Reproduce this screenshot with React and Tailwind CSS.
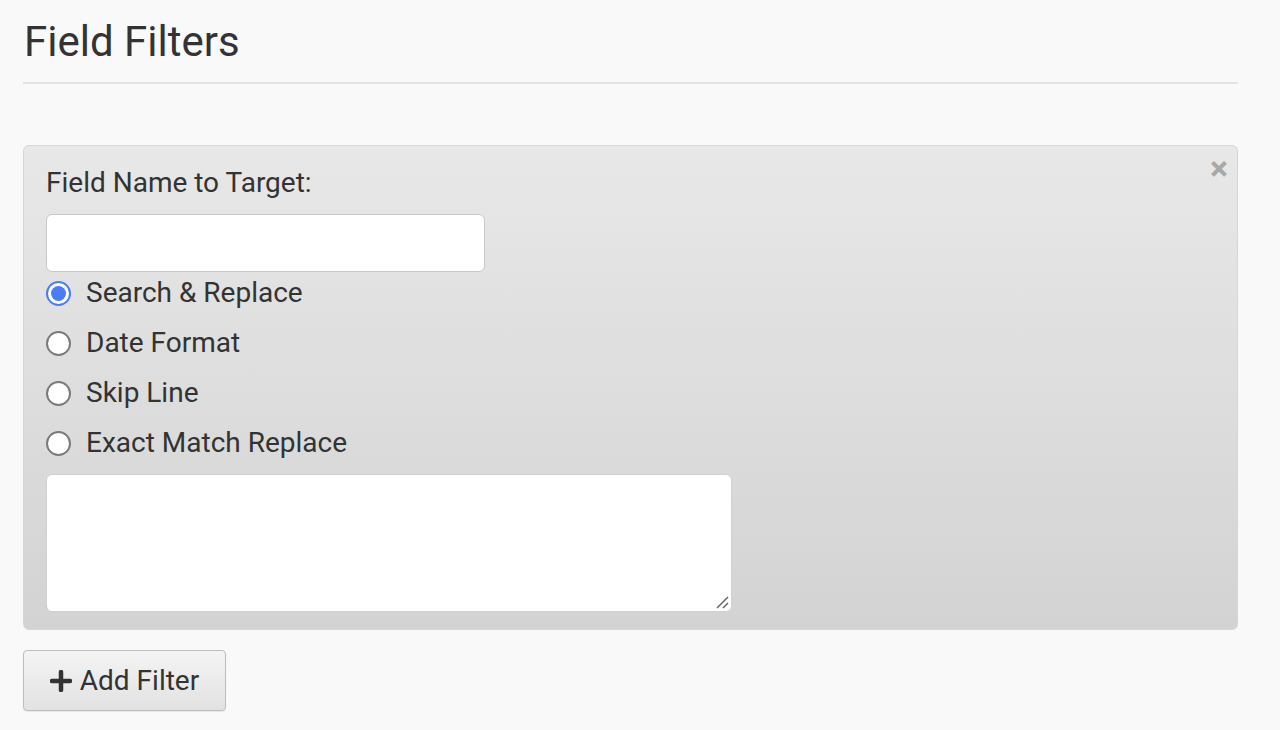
import React, { useState } from 'react';

const options = ['Search & Replace', 'Date Format', 'Skip Line', 'Exact Match Replace'];

const App = () => {
    const [selected, setSelected] = useState(0);

    return (
        <div className="min-h-[730px] w-full bg-[#f9f9f9] text-[#333333] font-['Roboto','Liberation_Sans',sans-serif]">
            <div className="pl-[23px] pr-[42px] pt-[14px]">
                {/* Titulo */}
                <h1 className="text-[42px] leading-[56px] font-normal pl-px">Field Filters</h1>
                <div className="mt-[12px] h-[2px] bg-[#e3e3e3]"></div>

                {/* Panel de filtro */}
                <div className="relative mt-[61px] h-[485px] rounded-[6px] border border-[#d6d6d6] bg-gradient-to-b from-[#e8e8e8] to-[#d3d3d3] pl-[22px] pt-[20px]">
                    <button className="absolute right-[9px] top-[5px] text-[#a8a8a8] text-[34px] font-bold leading-none">×</button>
                    <label className="block text-[28px] leading-[34px]">Field Name to Target:</label>
                    <input
                        type="text"
                        className="mt-[14px] block h-[58px] w-[439px] rounded-[6px] border border-[#c8c8c8] bg-white outline-none"
                    />
                    <div className="-mt-[4px] flex flex-col">
                        {options.map((opt, i) => (
                            <label key={opt} className="flex h-[50px] items-center cursor-pointer" onClick={() => setSelected(i)}>
                                <span className={`flex h-[25px] w-[25px] items-center justify-center rounded-full bg-white border-2 ${selected === i ? 'border-[#4a7cf7]' : 'border-[#7a7a7a]'}`}>
                                    {selected === i && <span className="h-[15px] w-[15px] rounded-full bg-[#4a7cf7]"></span>}
                                </span>
                                <span className="ml-[15px] text-[28px]">{opt}</span>
                            </label>
                        ))}
                    </div>
                    <div className="relative mt-[6px] h-[138px] w-[686px] rounded-[6px] border border-[#d0d0d0] bg-white">
                        <svg className="absolute right-[2px] bottom-[2px]" width="14" height="14" viewBox="0 0 14 14">
                            <path d="M13 2 L2 13 M13 8 L8 13" stroke="#666" strokeWidth="1.5" />
                        </svg>
                    </div>
                </div>

                {/* Boton */}
                <button className="mt-[20px] flex h-[61px] w-[203px] items-center justify-center rounded-[4px] border border-[#bdbdbd] bg-gradient-to-b from-[#f4f4f4] to-[#e2e2e2] text-[28px] text-[#333333] shadow-[0_1px_1px_rgba(0,0,0,0.08)]">
                    <svg width="22" height="22" viewBox="0 0 22 22" className="mr-[8px]">
                        <path d="M11 2 V20 M2 11 H20" stroke="#333" strokeWidth="4.5" strokeLinecap="round" />
                    </svg>
                    Add Filter
                </button>
            </div>
        </div>
    );
};

export default App;
